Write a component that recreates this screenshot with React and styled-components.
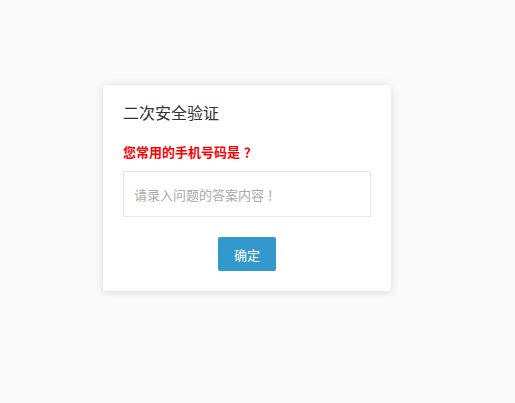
import styled, { createGlobalStyle } from "styled-components";
import { useState } from "react";

const GlobalStyle = createGlobalStyle`
  html, body {
    margin: 0;
    padding: 0;
    background: #fafafa;
    font-family: "Noto Sans CJK SC", "Liberation Sans", sans-serif;
  }
`;

const Page = styled.div`
  min-height: 403px;
  padding: 85px 0 0 103px;
  box-sizing: border-box;
`;

const Card = styled.div`
  width: 288px;
  box-sizing: border-box;
  padding: 15px 20px 20px;
  background: #fff;
  border-radius: 2px;
  box-shadow: 0 1px 8px rgba(0, 0, 0, 0.13);
  display: flex;
  flex-direction: column;
`;

const Title = styled.div`
  font-size: 16px;
  line-height: 24px;
  color: #333;
  margin-bottom: 18px;
`;

const Question = styled.div`
  font-size: 13px;
  line-height: 20px;
  font-weight: bold;
  color: #ff0000;
  margin-bottom: 9px;
`;

/* the question mark sits centred in its cell in the reference */
const Punct = styled.span`
  margin-left: ${({ $shift }) => $shift}px;
`;

const Answer = styled.input`
  height: 46px;
  width: 100%;
  box-sizing: border-box;
  border: 1px solid #e6e6e6;
  padding: 0 10px;
  font-size: 13px;
  font-family: inherit;
  color: #333;
  outline: none;

  &::placeholder {
    color: #aaa;
  }
`;

const Button = styled.button`
  align-self: center;
  margin-top: 20px;
  width: 58px;
  height: 34px;
  border: none;
  border-radius: 2px;
  background: #3399cc;
  color: #fff;
  font-size: 13px;
  font-family: inherit;
  cursor: pointer;
`;

export default function App() {
  const [answer, setAnswer] = useState("");

  return (
    <Page lang="zh-CN">
      <GlobalStyle />
      <Card>
        <Title>二次安全验证</Title>
        <Question>
          您常用的手机号码是<Punct $shift={4}>？</Punct>
        </Question>
        <Answer
          value={answer}
          onChange={(e) => setAnswer(e.target.value)}
          placeholder="请录入问题的答案内容 ！"
        />
        <Button>确定</Button>
      </Card>
    </Page>
  );
}
